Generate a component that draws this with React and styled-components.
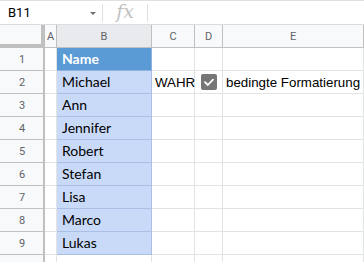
import React from 'react';
import styled, { createGlobalStyle } from 'styled-components';

const GlobalStyle = createGlobalStyle`
  html, body {
    margin: 0;
    padding: 0;
    background: #ffffff;
    overflow: hidden;
  }
  * {
    box-sizing: border-box;
  }
`;

const Page = styled.div`
  width: 364px;
  height: 262px;
  overflow: hidden;
  font-family: Arial, "Liberation Sans", sans-serif;
`;

const FormulaBar = styled.div`
  display: flex;
  align-items: center;
  height: 25px;
  border-top: 1px solid #e0e0e0;
  border-bottom: 1px solid #dadce0;
`;

const NameBox = styled.div`
  display: flex;
  align-items: center;
  justify-content: space-between;
  width: 102px;
  padding: 0 6px 0 8px;
  font-family: Roboto, Arial, sans-serif;
  font-size: 13px;
  color: #000;
`;

const Arrow = styled.span`
  width: 0;
  height: 0;
  border-left: 3px solid transparent;
  border-right: 3px solid transparent;
  border-top: 3px solid #6f6f6f;
  margin-top: 2px;
`;

const Divider = styled.div`
  width: 1px;
  height: 18px;
  background: #e0e0e0;
`;

const Fx = styled.div`
  width: 44px;
  text-align: center;
  font-family: "DejaVu Serif", "Liberation Serif", serif;
  font-style: italic;
  font-size: 19px;
  color: #c2c2c2;
  line-height: 1;
  padding-bottom: 2px;
`;

const Sheet = styled.div`
  display: grid;
  grid-template-columns: 45px 12px 95px 43px 28px 1fr;
  grid-template-rows: 23px;
  grid-auto-rows: 23px;
`;

const Corner = styled.div`
  background: #f8f9fa;
  border-right: 4px solid #c0c0c0;
  border-bottom: 4px solid #c0c0c0;
`;

const ColHeader = styled.div`
  display: flex;
  align-items: center;
  justify-content: center;
  background: ${p => (p.$selected ? '#e8eaed' : '#f8f9fa')};
  border-right: 1px solid #c0c0c0;
  border-bottom: 1px solid #c0c0c0;
  font-family: Roboto, Arial, sans-serif;
  font-size: 11px;
  color: #5f6368;
`;

const RowHeader = styled.div`
  display: flex;
  align-items: center;
  justify-content: center;
  background: #f8f9fa;
  border-right: 2px solid #c0c0c0;
  border-bottom: 1px solid #c0c0c0;
  font-family: Roboto, Arial, sans-serif;
  font-size: 11px;
  color: #5f6368;
  padding-left: 1px;
`;

const cellColors = {
  plain: { bg: '#ffffff', line: '#e2e3e3', color: '#000000' },
  head: { bg: '#5b9bd5', line: '#8fb2dc', color: '#ffffff' },
  light: { bg: '#c9daf8', line: '#a9bfe3', color: '#000000' },
};

const Cell = styled.div`
  display: flex;
  align-items: flex-end;
  justify-content: ${p => (p.$center ? 'center' : 'flex-start')};
  padding: 0 3px 3px ${p => (p.$calibri ? '5px' : '3px')};
  background: ${p => cellColors[p.$tone || 'plain'].bg};
  border-right: 1px solid ${p => cellColors[p.$tone || 'plain'].line};
  border-bottom: 1px solid ${p => cellColors[p.$tone || 'plain'].line};
  color: ${p => cellColors[p.$tone || 'plain'].color};
  font-family: ${p => (p.$calibri ? 'Lato, "Open Sans", sans-serif' : 'Arial, "Liberation Sans", sans-serif')};
  font-size: ${p => (p.$calibri ? '14px' : '13.33px')};
  font-weight: ${p => (p.$bold ? 700 : 400)};
  white-space: nowrap;
  overflow: visible;
`;

const CheckCell = styled(Cell)`
  align-items: center;
  padding: 0;
`;

const CheckBox = styled.span`
  display: flex;
  align-items: center;
  justify-content: center;
  width: 16px;
  height: 16px;
  border-radius: 2px;
  background: #767676;
`;

const columns = ['A', 'B', 'C', 'D', 'E'];

// row 10 is only a sliver at the bottom edge, its number is out of view
const names = ['Michael', 'Ann', 'Jennifer', 'Robert', 'Stefan', 'Lisa', 'Marco', 'Lukas', ''];

const CheckMark = () => (
  <svg width="12" height="12" viewBox="0 0 12 12">
    <path d="M2 6.2 L4.8 9 L10 3.6" fill="none" stroke="#ffffff" strokeWidth="1.8" strokeLinecap="round" strokeLinejoin="round" />
  </svg>
);

const App = () => {
  return (
    <Page>
      <GlobalStyle />
      <FormulaBar>
        <NameBox>
          B11
          <Arrow />
        </NameBox>
        <Divider />
        <Fx>fx</Fx>
        <Divider />
      </FormulaBar>

      <Sheet>
        <Corner />
        {columns.map(c => (
          <ColHeader key={c} $selected={c === 'B'}>{c}</ColHeader>
        ))}

        <RowHeader>1</RowHeader>
        <Cell />
        <Cell $tone="head" $calibri $bold>Name</Cell>
        <Cell />
        <Cell />
        <Cell />

        {names.map((name, i) => {
          const row = i + 2;
          const isFirst = row === 2;
          return (
            <React.Fragment key={row}>
              <RowHeader>{name ? row : ''}</RowHeader>
              <Cell />
              <Cell $tone={name ? 'light' : 'plain'} $calibri>{name}</Cell>
              <Cell>{isFirst ? 'WAHR' : ''}</Cell>
              {isFirst ? (
                <CheckCell $center>
                  <CheckBox>
                    <CheckMark />
                  </CheckBox>
                </CheckCell>
              ) : (
                <Cell />
              )}
              <Cell>{isFirst ? 'bedingte Formatierung' : ''}</Cell>
            </React.Fragment>
          );
        })}
      </Sheet>
    </Page>
  );
};

export default App;
